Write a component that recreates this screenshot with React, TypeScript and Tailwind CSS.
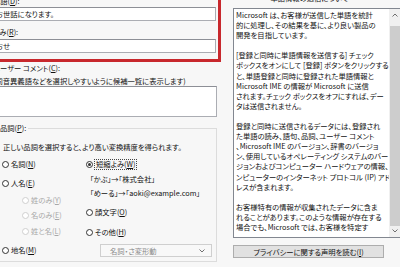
import React from 'react';

function Key({ k }: { k: string }) {
  return (
    <span>
      (<span className="underline">{k}</span>)
    </span>
  );
}

function Radio({ checked, disabled }: { checked?: boolean; disabled?: boolean }) {
  return (
    <span
      className={
        disabled
          ? 'w-[7px] h-[7px] rounded-full border border-[#cfcfcf] bg-white shrink-0'
          : 'w-[7px] h-[7px] rounded-full border border-[#333333] bg-white shrink-0 flex items-center justify-center'
      }
    >
      {checked && <span className="w-[3px] h-[3px] rounded-full bg-[#333333]" />}
    </span>
  );
}

function Chevron({ up }: { up?: boolean }) {
  return (
    <svg width="6" height="4" viewBox="0 0 6 4">
      <polyline
        points={up ? '0.5,3.5 3,1 5.5,3.5' : '0.5,0.5 3,3 5.5,0.5'}
        fill="none"
        stroke="#606060"
        strokeWidth="0.9"
      />
    </svg>
  );
}

function LeftPane() {
  return (
    <div className="ml-[-7px] w-[224px] shrink-0 flex flex-col">
      {/* red annotation round word + reading */}
      <div className="-ml-[3px] -mr-[4px] mt-[-4px] border-x-[3px] border-b-[3px] border-[#c8282d] pr-[2px] pb-[6px] flex flex-col">
        <div className="h-[10px]">
          単語<Key k="D" />:
        </div>
        <div className="mt-[1px] h-[14px] border border-[#abadb3] border-t-[#8d8f96] bg-white pl-[2px] flex items-center">
          お世話になります。
        </div>
        <div className="mt-[6px] h-[10px]">
          よみ<Key k="R" />:
        </div>
        <div className="mt-[2px] h-[14px] border border-[#abadb3] border-t-[#8d8f96] bg-white pl-[2px] flex items-center">
          おせ
        </div>
      </div>

      <div className="mt-[1px] h-[10px]">
        ユーザー コメント<Key k="C" />:
      </div>
      <div className="mt-[3px] h-[10px] whitespace-nowrap">
        (同音異義語などを選択しやすいように候補一覧に表示します)
      </div>
      <div className="h-[31px] border border-[#abadb3] border-t-[#8d8f96] bg-white" />

      <fieldset className="ml-[3px] mt-[6px] border border-[#dcdcdc] pl-[3px] pb-[4px]">
        <legend className="h-[10px] pr-[2px]">
          品詞<Key k="P" />:
        </legend>
        <div className="mt-[9px] ml-[3px] h-[10px] whitespace-nowrap">
          正しい品詞を選択すると、より高い変換精度を得られます。
        </div>
        <div className="mt-[5px] flex">
          <div className="ml-[2px] w-[84px] flex flex-col">
            <div className="h-[14px] flex items-center gap-[2px]">
              <Radio />
              <span>
                名詞<Key k="N" />
              </span>
            </div>
            <div className="mt-[5px] h-[14px] flex items-center gap-[2px]">
              <Radio />
              <span>
                人名<Key k="E" />
              </span>
            </div>
            <div className="mt-[3px] h-[14px] pl-[20px] flex items-center gap-[2px] text-[#a8a8a8]">
              <Radio disabled />
              <span>
                姓のみ<Key k="Y" />
              </span>
            </div>
            <div className="mt-[1px] h-[14px] pl-[20px] flex items-center gap-[2px] text-[#a8a8a8]">
              <Radio disabled />
              <span>
                名のみ<Key k="E" />
              </span>
            </div>
            <div className="mt-[2px] h-[14px] pl-[20px] flex items-center gap-[2px] text-[#a8a8a8]">
              <Radio disabled />
              <span>
                姓と名<Key k="L" />
              </span>
            </div>
            <div className="mt-[5px] h-[14px] flex items-center gap-[2px]">
              <Radio />
              <span>
                地名<Key k="M" />
              </span>
            </div>
          </div>

          <div className="flex flex-col">
            <div className="h-[14px] flex items-center gap-[1px]">
              <Radio checked />
              <span className="border border-dotted border-[#444444] px-[1px] leading-[9px]">
                短縮よみ<Key k="W" />
              </span>
            </div>
            <div className="mt-[1px] h-[14px] pl-[4px] flex items-center whitespace-nowrap">
              「かぶ」→「株式会社」
            </div>
            <div className="h-[14px] pl-[4px] flex items-center whitespace-nowrap">
              「めーる」→「aoki@example.com」
            </div>
            <div className="mt-[5px] h-[14px] flex items-center gap-[2px]">
              <Radio />
              <span>
                顔文字<Key k="O" />
              </span>
            </div>
            <div className="mt-[6px] h-[14px] flex items-center gap-[2px]">
              <Radio />
              <span>
                その他<Key k="H" />
              </span>
            </div>
            <div className="mt-[5px] ml-[14px] w-[112px] h-[13px] border border-[#cfcfcf] bg-[#f8f8f8] pl-[9px] pr-[6px] flex items-center justify-between text-[#8a8a8a]">
              <span>名詞・さ変形動</span>
              <Chevron />
            </div>
          </div>
        </div>
      </fieldset>
    </div>
  );
}

const privacyLines = [
  'Microsoft は、お客様が送信した単語を統計',
  '的に処理し、その結果を基に、より良い製品の',
  '開発を目指しています。',
  '',
  '[登録と同時に単語情報を送信する] チェック',
  'ボックスをオンにして [登録] ボタンをクリックする',
  'と、単語登録と同時に登録された単語情報と',
  'Microsoft IME の情報が Microsoft に送信',
  'されます。チェック ボックスをオフにすれば、デー',
  'タは送信されません。',
  '',
  '登録と同時に送信されるデータには、登録され',
  'た単語の読み、語句、品詞、ユーザー コメント',
  '、Microsoft IME のバージョン、辞書のバージョ',
  'ン、使用しているオペレーティング システムのバー',
  'ジョンおよびコンピューター ハードウェアの情報、コ',
  'ンピューターのインターネット プロトコル (IP) アド',
  'レスが含まれます。',
  '',
  'お客様特有の情報が収集されたデータに含ま',
  'れることがあります。このような情報が存在する',
  '場合でも、Microsoft では、お客様を特定す',
];

function RightPane() {
  return (
    <div className="ml-[16px] w-[169px] shrink-0 flex flex-col">
      <div className="mt-[-7px] h-[10px] text-center pr-[16px] whitespace-nowrap">
        単語情報の送信について
      </div>
      <div className="mt-[5px] h-[230px] border border-[#828790] bg-white flex">
        <div className="flex-1 pl-[2px] pt-[1px] leading-[10.1px] whitespace-nowrap overflow-hidden">
          {privacyLines.map((line, i) => (
            <div key={i} className="h-[10.1px]">
              {line}
            </div>
          ))}
        </div>
        <div className="w-[12px] bg-[#f0f0f0] flex flex-col items-center">
          <div className="h-[17px] pt-[4px]">
            <Chevron up />
          </div>
          <div className="w-[10px] h-[200px] bg-[#cdcdcd]" />
          <div className="h-[11px] pt-[3px]">
            <Chevron />
          </div>
        </div>
      </div>
      <div className="mt-[7px] w-[151px] h-[13px] border border-[#adadad] bg-[#e1e1e1] flex items-center justify-center whitespace-nowrap">
        プライバシーに関する声明を読む<Key k="I" />
      </div>
    </div>
  );
}

export default function App() {
  return (
    <div className="w-[400px] h-[267px] overflow-hidden bg-[#f7f7f7] text-[7.3px] leading-[10px] text-[#111111] font-['Noto_Sans_CJK_JP','Noto_Sans',sans-serif] [font-feature-settings:'palt'] flex">
      <LeftPane />
      <RightPane />
    </div>
  );
}
